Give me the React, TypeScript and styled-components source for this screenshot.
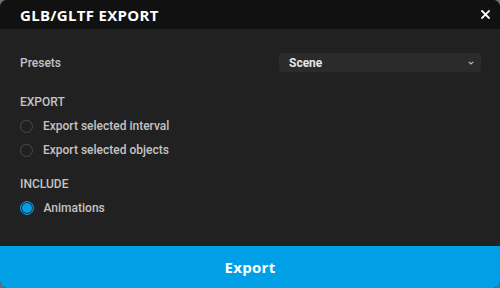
import React from "react";
import styled, { createGlobalStyle } from "styled-components";

const Global = createGlobalStyle`
  html, body { margin: 0; padding: 0; background: #6f6f6f; }
  body { width: 500px; height: 288px; overflow: hidden; }
  * { box-sizing: border-box; }
`;

const Dialog = styled.div`
  width: 500px;
  height: 288px;
  border-radius: 7px;
  overflow: hidden;
  background: #212121;
  display: flex;
  flex-direction: column;
  font-family: Roboto, "Liberation Sans", sans-serif;
`;

const Header = styled.div`
  height: 29px;
  background: #111111;
  display: flex;
  align-items: center;
  justify-content: space-between;
  padding: 0 10px 0 20px;
  flex-shrink: 0;
`;

const Title = styled.h1`
  margin: 0;
  font-family: "Open Sans", "DejaVu Sans", sans-serif;
  font-weight: 700;
  font-size: 15px;
  letter-spacing: 0.3px;
  color: #ffffff;
`;

const Close = styled.button`
  border: 0;
  background: none;
  padding: 0;
  width: 10px;
  height: 10px;
  display: flex;
  align-items: center;
  justify-content: center;
  cursor: pointer;
`;

const Body = styled.div`
  flex: 1;
  padding: 24px 19px 0 20px;
  display: flex;
  flex-direction: column;
`;

const Row = styled.div`
  display: flex;
  align-items: center;
  justify-content: space-between;
  height: 19px;
`;

const Label = styled.span`
  font-size: 12px;
  font-weight: 500;
  color: #c4c4c4;
`;

const Select = styled.div`
  width: 202px;
  height: 19px;
  background: #2b2b2b;
  border-radius: 4px;
  display: flex;
  align-items: center;
  justify-content: space-between;
  padding: 0 7px 0 10px;
  font-size: 12px;
  font-weight: 700;
  color: #e6e6e6;
`;

const Section = styled.div<{ $top: number }>`
  margin-top: ${(p) => p.$top}px;
  display: flex;
  flex-direction: column;
`;

const Heading = styled.div`
  font-size: 12px;
  font-weight: 500;
  color: #c4c4c4;
  height: 16px;
  line-height: 16px;
  margin-bottom: 4px;
`;

const Option = styled.label`
  display: flex;
  align-items: center;
  gap: 10px;
  height: 24px;
  font-size: 12px;
  font-weight: 500;
  color: #c4c4c4;
`;

const Radio = styled.span<{ $on?: boolean }>`
  width: ${(p) => (p.$on ? 14 : 13)}px;
  height: ${(p) => (p.$on ? 14 : 13)}px;
  margin-left: ${(p) => (p.$on ? -0.5 : 0)}px;
  border-radius: 50%;
  border: 1px solid ${(p) => (p.$on ? "#0b8fd6" : "#4a4a4a")};
  background: ${(p) => (p.$on ? "#0a9be6" : "transparent")};
  box-shadow: ${(p) => (p.$on ? "inset 0 0 0 1px #1c2a33" : "none")};
  flex-shrink: 0;
`;

const ExportButton = styled.button`
  height: 42px;
  flex-shrink: 0;
  border: 0;
  background: #009fe6;
  color: #ffffff;
  font-family: "Open Sans", "DejaVu Sans", sans-serif;
  font-weight: 700;
  font-size: 15px;
  letter-spacing: 0.3px;
  cursor: pointer;
`;

export default function App() {
  return (
    <>
      <Global />
      <Dialog>
        <Header>
          <Title>GLB/GLTF EXPORT</Title>
          <Close aria-label="close">
            <svg width="9" height="9" viewBox="0 0 9 9">
              <path d="M1 1L8 8M8 1L1 8" stroke="#ffffff" strokeWidth="1.8" strokeLinecap="square" />
            </svg>
          </Close>
        </Header>
        <Body>
          <Row>
            <Label>Presets</Label>
            <Select>
              <span>Scene</span>
              <svg width="6" height="4" viewBox="0 0 6 4">
                <path d="M0.8 0.8L3 3L5.2 0.8" stroke="#bbbbbb" strokeWidth="1.2" fill="none" />
              </svg>
            </Select>
          </Row>
          <Section $top={22}>
            <Heading>EXPORT</Heading>
            <Option>
              <Radio />
              Export selected interval
            </Option>
            <Option>
              <Radio />
              Export selected objects
            </Option>
          </Section>
          <Section $top={14}>
            <Heading>INCLUDE</Heading>
            <Option>
              <Radio $on />
              Animations
            </Option>
          </Section>
        </Body>
        <ExportButton>Export</ExportButton>
      </Dialog>
    </>
  );
}
